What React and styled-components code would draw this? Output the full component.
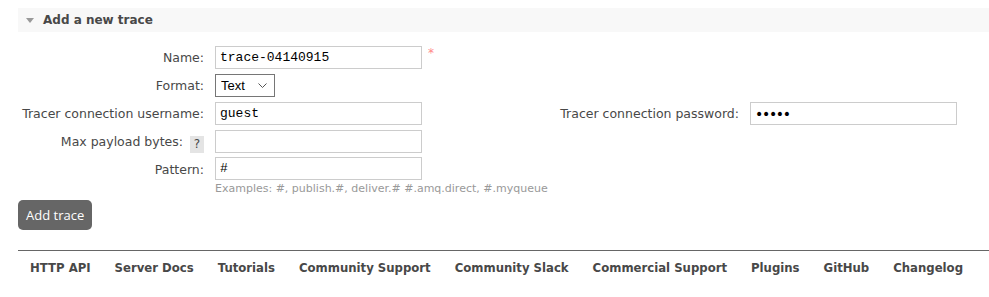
import React from "react";
import styled, { createGlobalStyle } from "styled-components";

const GlobalStyle = createGlobalStyle`
  body {
    margin: 0;
    background: #fff;
    font-family: "DejaVu Sans", Verdana, sans-serif;
    font-size: 12.5px;
    color: #484848;
  }
`;

// Contenedor de la pagina
const Page = styled.div`
  padding: 8px 0 0 18px;
`;

// Cabecera de la seccion, con su triangulo
const SectionTitle = styled.h2`
  margin: 0;
  height: 24px;
  line-height: 24px;
  background: #f8f8f8;
  font-size: 12px;
  font-weight: bold;
  color: #484848;
  display: flex;
  align-items: center;
  padding-left: 8px;
`;

const Triangle = styled.span`
  width: 0;
  height: 0;
  border-left: 4px solid transparent;
  border-right: 4px solid transparent;
  border-top: 5px solid #999;
  margin-right: 9px;
`;

// Formulario en rejilla
const FormGrid = styled.div`
  display: grid;
  grid-template-columns: 192px 220px 315px auto;
  grid-template-rows: 23px 23px 23px 23px auto;
  row-gap: 5px;
  margin-top: 14px;
  align-items: start;
`;

const Label = styled.label`
  grid-column: ${(p) => p.$col || 1};
  text-align: right;
  padding-right: 6px;
  line-height: 23px;
  height: 23px;
  white-space: nowrap;
  display: flex;
  justify-content: flex-end;
  align-items: center;
  gap: 7px;
`;

const Field = styled.div`
  grid-column: ${(p) => p.$col || 2};
  padding-left: 5px;
  display: flex;
  flex-direction: ${(p) => (p.$stack ? "column" : "row")};
  align-items: flex-start;
  margin-top: ${(p) => (p.$stack ? "-1px" : "0")};
`;

const TextInput = styled.input`
  box-sizing: border-box;
  flex-shrink: 0;
  width: 207px;
  height: 23px;
  border: 1px solid #ccc;
  border-radius: 0;
  padding: 0 4px;
  font-family: "Liberation Mono", "Courier New", monospace;
  font-size: 13px;
  color: #000;
  outline: none;
  margin: 0;
  &[type="password"] {
    font-family: "DejaVu Sans", Verdana, sans-serif;
    font-size: 14px;
    letter-spacing: -1.3px;
  }
`;

const Select = styled.select`
  box-sizing: border-box;
  appearance: none;
  width: 60px;
  height: 23px;
  font-family: "Liberation Sans", Arial, sans-serif;
  font-size: 13px;
  color: #000;
  border: 1px solid #767676;
  border-radius: 0;
  background: #fff
    url("data:image/svg+xml,%3Csvg xmlns='http://www.w3.org/2000/svg' width='9' height='5' viewBox='0 0 9 5'%3E%3Cpath d='M0.5 0.5 L4.5 4.5 L8.5 0.5' fill='none' stroke='%23555' stroke-width='1'/%3E%3C/svg%3E")
    no-repeat right 7px center;
  padding: 0 0 0 5px;
  margin: 0;
`;

const Mandatory = styled.span`
  color: #f88;
  font-size: 12px;
  line-height: 14px;
  padding-left: 6px;
`;

const Help = styled.span`
  display: inline-block;
  background: #e4e4e4;
  width: 14px;
  height: 17px;
  line-height: 17px;
  text-align: center;
  font-size: 12px;
  margin-top: 5px;
`;

const Hint = styled.span`
  font-size: 11px;
  color: #999;
  margin-top: 2px;
  white-space: nowrap;
`;

const Button = styled.button`
  margin-top: 5px;
  height: 30px;
  padding: 0 8px;
  background: #666;
  color: #fff;
  border: none;
  border-radius: 5px;
  font-family: "Open Sans", sans-serif;
  font-size: 13px;
  cursor: pointer;
`;

// Pie con los enlaces
const Footer = styled.div`
  margin-top: 20px;
  border-top: 1px solid #666;
  display: flex;
  padding-top: 10px;
`;

const FooterLink = styled.a`
  padding: 0 12px;
  font-weight: bold;
  font-size: 11.7px;
  color: #484848;
  text-decoration: none;
  line-height: 14px;
  white-space: nowrap;
`;

const links = [
  "HTTP API",
  "Server Docs",
  "Tutorials",
  "Community Support",
  "Community Slack",
  "Commercial Support",
  "Plugins",
  "GitHub",
  "Changelog",
];

export default function App() {
  return (
    <Page>
      <GlobalStyle />
      <SectionTitle>
        <Triangle />
        Add a new trace
      </SectionTitle>
      <FormGrid>
        <Label>Name:</Label>
        <Field>
          <TextInput defaultValue="trace-04140915" />
          <Mandatory>*</Mandatory>
        </Field>

        <Label>Format:</Label>
        <Field>
          <Select defaultValue="text">
            <option value="text">Text</option>
            <option value="json">JSON</option>
          </Select>
        </Field>

        <Label>Tracer connection username:</Label>
        <Field>
          <TextInput defaultValue="guest" />
        </Field>
        <Label $col={3}>Tracer connection password:</Label>
        <Field $col={4}>
          <TextInput type="password" defaultValue="guest" />
        </Field>

        <Label>
          Max payload bytes:
          <Help>?</Help>
        </Label>
        <Field>
          <TextInput />
        </Field>

        <Label>Pattern:</Label>
        <Field $stack>
          <TextInput defaultValue="#" />
          <Hint>Examples: #, publish.#, deliver.# #.amq.direct, #.myqueue</Hint>
        </Field>
      </FormGrid>
      <Button>Add trace</Button>
      <Footer>
        {links.map((l) => (
          <FooterLink key={l} href="#">
            {l}
          </FooterLink>
        ))}
      </Footer>
    </Page>
  );
}
